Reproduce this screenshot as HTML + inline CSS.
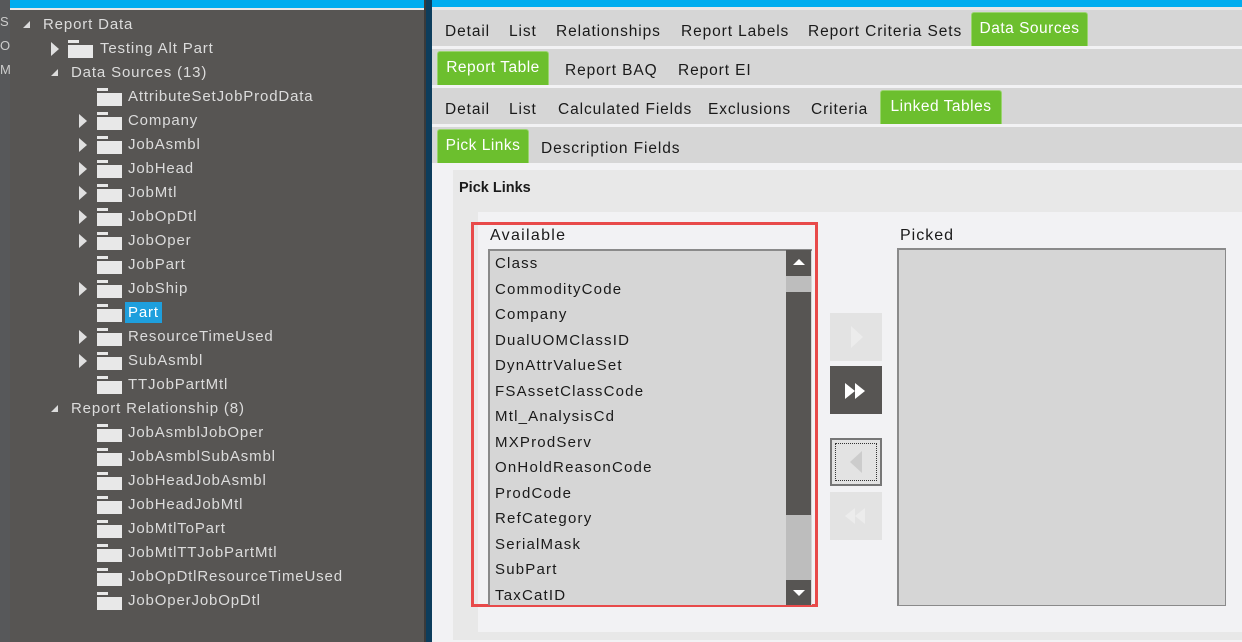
<!DOCTYPE html>
<html><head><style>
*{margin:0;padding:0;box-sizing:border-box}
body{width:1242px;height:642px;overflow:hidden;background:#f2f2f4;font-family:"Liberation Sans",sans-serif;position:relative}
.a{position:absolute}
.lt{color:#dcdcdc;font-size:15px;white-space:nowrap;letter-spacing:0.85px}
.fold{position:absolute;width:25px;height:18px}
.fold:before{content:"";position:absolute;left:0;top:0;width:11px;height:3px;background:#e8e8e8}
.fold:after{content:"";position:absolute;left:0;top:5px;width:25px;height:13px;background:#e8e8e8}
.exp{position:absolute;width:0;height:0;border-left:8px solid #e0e0e0;border-top:7px solid transparent;border-bottom:7px solid transparent}
.col{position:absolute;width:0;height:0;border-right:7px solid #dcdcdc;border-top:7px solid transparent}
.row{position:absolute;left:432px;right:0;height:36px;background:#d6d6d6;font-size:15.5px;color:#1a1a1a}
.row span{position:absolute;top:13px;white-space:nowrap;letter-spacing:0.9px}
.g{position:absolute;top:2px;height:34px;background:#6cbf2e;border:1px solid #9ad46f;border-bottom:none;border-radius:3px 3px 0 0;color:#fff;padding-top:7px;text-align:center;font-size:15.5px;letter-spacing:0.5px;white-space:nowrap}
.it{position:absolute;left:495px;font-size:15px;color:#1a1a1a;letter-spacing:1.2px}
.btn{position:absolute;left:830px;width:52px;height:48px;background:#e3e3e3}
</style></head><body>
<div class="a" style="left:0;top:0;width:10px;height:642px;background:#57585a"></div>
<div class="a" style="left:0;top:10px;color:#ccc;font-size:13px;line-height:24px">S<br>O<br>M</div>
<div class="a" style="left:10px;top:0;width:416px;height:642px;background:#575553"></div>
<div class="a" style="left:10px;top:0;width:416px;height:8px;background:#00adef"></div>
<div class="a" style="left:10px;top:8px;width:416px;height:2px;background:#e8e8e8"></div>
<div class="a" style="left:424px;top:0;width:2px;height:642px;background:#3a3a3a"></div>
<div class="a" style="left:426px;top:0;width:6px;height:642px;background:#0d3d5c"></div>

<div class="col" style="left:23px;top:21px"></div><div class="a lt" style="left:43px;top:16px">Report Data</div>
<div class="exp" style="left:51px;top:42px"></div><div class="fold" style="left:68px;top:40px"></div><div class="a lt" style="left:100px;top:40px">Testing Alt Part</div>
<div class="col" style="left:51px;top:69px"></div><div class="a lt" style="left:71px;top:64px">Data Sources (13)</div>
<div class="fold" style="left:97px;top:88px"></div><div class="a lt" style="left:128px;top:88px">AttributeSetJobProdData</div>
<div class="exp" style="left:79px;top:114px"></div><div class="fold" style="left:97px;top:112px"></div><div class="a lt" style="left:128px;top:112px">Company</div>
<div class="exp" style="left:79px;top:138px"></div><div class="fold" style="left:97px;top:136px"></div><div class="a lt" style="left:128px;top:136px">JobAsmbl</div>
<div class="exp" style="left:79px;top:162px"></div><div class="fold" style="left:97px;top:160px"></div><div class="a lt" style="left:128px;top:160px">JobHead</div>
<div class="exp" style="left:79px;top:186px"></div><div class="fold" style="left:97px;top:184px"></div><div class="a lt" style="left:128px;top:184px">JobMtl</div>
<div class="exp" style="left:79px;top:210px"></div><div class="fold" style="left:97px;top:208px"></div><div class="a lt" style="left:128px;top:208px">JobOpDtl</div>
<div class="exp" style="left:79px;top:234px"></div><div class="fold" style="left:97px;top:232px"></div><div class="a lt" style="left:128px;top:232px">JobOper</div>
<div class="fold" style="left:97px;top:256px"></div><div class="a lt" style="left:128px;top:256px">JobPart</div>
<div class="exp" style="left:79px;top:282px"></div><div class="fold" style="left:97px;top:280px"></div><div class="a lt" style="left:128px;top:280px">JobShip</div>
<div class="fold" style="left:97px;top:304px"></div><div class="a" style="left:125px;top:302px;width:37px;height:21px;background:#1e9fdd"></div><div class="a lt" style="left:128px;top:304px;color:#fff">Part</div>
<div class="exp" style="left:79px;top:330px"></div><div class="fold" style="left:97px;top:328px"></div><div class="a lt" style="left:128px;top:328px">ResourceTimeUsed</div>
<div class="exp" style="left:79px;top:354px"></div><div class="fold" style="left:97px;top:352px"></div><div class="a lt" style="left:128px;top:352px">SubAsmbl</div>
<div class="fold" style="left:97px;top:376px"></div><div class="a lt" style="left:128px;top:376px">TTJobPartMtl</div>
<div class="col" style="left:51px;top:405px"></div><div class="a lt" style="left:71px;top:400px">Report Relationship (8)</div>
<div class="fold" style="left:97px;top:424px"></div><div class="a lt" style="left:128px;top:424px">JobAsmblJobOper</div>
<div class="fold" style="left:97px;top:448px"></div><div class="a lt" style="left:128px;top:448px">JobAsmblSubAsmbl</div>
<div class="fold" style="left:97px;top:472px"></div><div class="a lt" style="left:128px;top:472px">JobHeadJobAsmbl</div>
<div class="fold" style="left:97px;top:496px"></div><div class="a lt" style="left:128px;top:496px">JobHeadJobMtl</div>
<div class="fold" style="left:97px;top:520px"></div><div class="a lt" style="left:128px;top:520px">JobMtlToPart</div>
<div class="fold" style="left:97px;top:544px"></div><div class="a lt" style="left:128px;top:544px">JobMtlTTJobPartMtl</div>
<div class="fold" style="left:97px;top:568px"></div><div class="a lt" style="left:128px;top:568px">JobOpDtlResourceTimeUsed</div>
<div class="fold" style="left:97px;top:592px"></div><div class="a lt" style="left:128px;top:592px">JobOperJobOpDtl</div>

<div class="a" style="left:432px;top:0;width:810px;height:7px;background:#00adef"></div>
<div class="a" style="left:432px;top:7px;width:810px;height:3px;background:#e8e8e8"></div>
<div class="row" style="top:10px"><span style="left:13px;top:13px">Detail</span><span style="left:77px;top:13px">List</span><span style="left:124px;top:13px">Relationships</span><span style="left:249px;top:13px">Report Labels</span><span style="left:376px;top:13px">Report Criteria Sets</span><div class="g" style="left:539px;width:117px">Data Sources</div></div>
<div class="row" style="top:49px"><div class="g" style="left:5px;width:112px">Report Table</div><span style="left:133px;top:13px">Report BAQ</span><span style="left:246px;top:13px">Report EI</span></div>
<div class="row" style="top:88px"><span style="left:13px;top:13px">Detail</span><span style="left:77px;top:13px">List</span><span style="left:126px;top:13px">Calculated Fields</span><span style="left:276px;top:13px">Exclusions</span><span style="left:379px;top:13px">Criteria</span><div class="g" style="left:448px;width:122px">Linked Tables</div></div>
<div class="row" style="top:127px"><div class="g" style="left:5px;width:92px">Pick Links</div><span style="left:109px;top:13px">Description Fields</span></div>

<div class="a" style="left:453px;top:170px;width:789px;height:470px;background:#e8e8e8"></div>
<div class="a" style="left:459px;top:180px;font-size:14.5px;font-weight:bold;color:#1a1a1a">Pick Links</div>
<div class="a" style="left:478px;top:212px;width:764px;height:420px;background:#f2f2f4"></div>
<div class="a" style="left:471px;top:222px;width:347px;height:385px;border:3px solid #e84a4a"></div>
<div class="a" style="left:490px;top:227px;font-size:16px;color:#1a1a1a;letter-spacing:1.3px">Available</div>
<div class="a" style="left:488px;top:249px;width:324px;height:356px;background:#d6d6d6;border-left:2px solid #8a8a8a;border-top:2px solid #8a8a8a"></div>
<div class="a" style="left:786px;top:250px;width:25px;height:355px;background:#bdbdbd"></div>
<div class="a" style="left:786px;top:250px;width:25px;height:26px;background:#575553"></div>
<div class="a" style="left:793px;top:259px;border-bottom:6px solid #fff;border-left:6px solid transparent;border-right:6px solid transparent"></div>
<div class="a" style="left:786px;top:292px;width:25px;height:223px;background:#575553"></div>
<div class="a" style="left:786px;top:580px;width:25px;height:25px;background:#575553"></div>
<div class="a" style="left:793px;top:590px;border-top:6px solid #fff;border-left:6px solid transparent;border-right:6px solid transparent"></div>
<div class="it" style="top:255px">Class</div>
<div class="it" style="top:281px">CommodityCode</div>
<div class="it" style="top:306px">Company</div>
<div class="it" style="top:332px">DualUOMClassID</div>
<div class="it" style="top:357px">DynAttrValueSet</div>
<div class="it" style="top:383px">FSAssetClassCode</div>
<div class="it" style="top:408px">Mtl_AnalysisCd</div>
<div class="it" style="top:434px">MXProdServ</div>
<div class="it" style="top:459px">OnHoldReasonCode</div>
<div class="it" style="top:485px">ProdCode</div>
<div class="it" style="top:510px">RefCategory</div>
<div class="it" style="top:536px">SerialMask</div>
<div class="it" style="top:561px">SubPart</div>
<div class="it" style="top:587px">TaxCatID</div>

<div class="btn" style="top:313px"><div class="a" style="left:21px;top:13px;border-left:12px solid #ececec;border-top:11px solid transparent;border-bottom:11px solid transparent"></div></div>
<div class="btn" style="top:366px;background:#575553"><div class="a" style="left:15px;top:17px;border-left:10px solid #fff;border-top:8px solid transparent;border-bottom:8px solid transparent"></div><div class="a" style="left:25px;top:17px;border-left:10px solid #fff;border-top:8px solid transparent;border-bottom:8px solid transparent"></div></div>
<div class="btn" style="top:438px;border:2px solid #777"><div class="a" style="left:3px;top:3px;right:3px;bottom:3px;border:1px dotted #333"></div><div class="a" style="left:18px;top:11px;border-right:12px solid #ccc;border-top:11px solid transparent;border-bottom:11px solid transparent"></div></div>
<div class="btn" style="top:492px"><div class="a" style="left:15px;top:16px;border-right:10px solid #ececec;border-top:8px solid transparent;border-bottom:8px solid transparent"></div><div class="a" style="left:25px;top:16px;border-right:10px solid #ececec;border-top:8px solid transparent;border-bottom:8px solid transparent"></div></div>

<div class="a" style="left:900px;top:227px;font-size:16px;color:#1a1a1a;letter-spacing:1px">Picked</div>
<div class="a" style="left:897px;top:248px;width:329px;height:358px;background:#d6d6d6;border:2px solid #8a8a8a;border-right-width:1px;border-bottom-width:1px"></div>
</body></html>
